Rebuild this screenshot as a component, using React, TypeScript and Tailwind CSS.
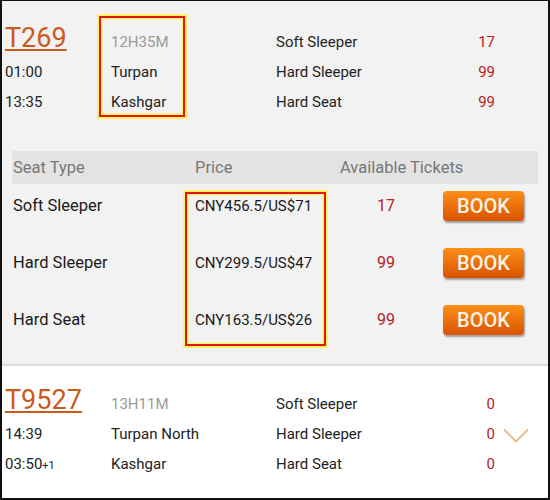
import React from "react";

const font = { fontFamily: "Roboto, 'Noto Sans', sans-serif" };

function TopRow({
  c1,
  c2,
  c3,
  c4,
  c2Gray,
  big,
}: {
  c1: React.ReactNode;
  c2: string;
  c3: string;
  c4: string;
  c2Gray?: boolean;
  big?: boolean;
}) {
  return (
    <div className="flex h-[30px] text-[15px] leading-[30px] text-[#222]">
      {big ? (
        <div className="w-[106px] text-[27px] leading-[22px] text-[#cb5a1c] underline decoration-[1.5px] underline-offset-[2px]">
          {c1}
        </div>
      ) : (
        <div className="w-[106px]">{c1}</div>
      )}
      <div className={c2Gray ? "w-[165px] text-[#9a9a9a]" : "w-[165px]"}>{c2}</div>
      <div className="w-[160px]">{c3}</div>
      <div className="w-[59px] text-right text-[#b3221f]">{c4}</div>
    </div>
  );
}

function BookRow({ seat, price, count }: { seat: string; price: string; count: string }) {
  return (
    <div className="flex h-[30px]">
      <div className="w-[183px] pl-px text-[16.5px] leading-[30px] text-[#1a1a1a]">{seat}</div>
      <div className="w-[145px] text-[15px] leading-[30px] text-[#1a1a1a]">{price}</div>
      <div className="w-[103px] pl-[37px] text-[16px] leading-[30px] text-[#b3221f]">{count}</div>
      <button className="h-[30px] w-[81px] rounded-[4px] bg-gradient-to-b from-[#fb8f17] to-[#d95200] text-[20px] leading-[30px] font-medium text-[#fff3e6] shadow-[1px_2px_2px_rgba(0,0,0,0.35)]">
        BOOK
      </button>
    </div>
  );
}

const hl =
  "absolute border-2 border-[#e0161b] shadow-[0_0_0_2px_#fff25e,inset_0_0_0_1.5px_#fff36b]";

export default function App() {
  return (
    <div
      style={font}
      className="h-[500px] w-[550px] overflow-hidden border-t border-l-2 border-r-2 border-b-2 border-[#111] bg-white"
    >
      <div className="relative h-[365px] border-b-2 border-[#dcdcdc] bg-[#f2f2f2] pt-[26px]">
        <div className="pl-[3px]">
          <TopRow big c1="T269" c2="12H35M" c2Gray c3="Soft Sleeper" c4="17" />
          <TopRow c1="01:00" c2="Turpan" c3="Hard Sleeper" c4="99" />
          <TopRow c1="13:35" c2="Kashgar" c3="Hard Seat" c4="99" />
        </div>
        <div className="mx-[10px] mt-[34px]">
          <div className="flex h-[33px] bg-[#e3e3e3] text-[16.5px] leading-[33px] text-[#777]">
            <div className="w-[183px] pl-px">Seat Type</div>
            <div className="w-[145px]">Price</div>
            <div>Available Tickets</div>
          </div>
          <div className="flex flex-col gap-[27px] pt-[7px]">
            <BookRow seat="Soft Sleeper" price="CNY456.5/US$71" count="17" />
            <BookRow seat="Hard Sleeper" price="CNY299.5/US$47" count="99" />
            <BookRow seat="Hard Seat" price="CNY163.5/US$26" count="99" />
          </div>
        </div>
        <div className={hl + " left-[97px] top-[15px] h-[101px] w-[86px]"} />
        <div className={hl + " left-[183px] top-[191px] h-[154px] w-[141px]"} />
      </div>
      <div className="relative bg-white pt-[23px]">
        <div className="pl-[3px]">
          <TopRow big c1="T9527" c2="13H11M" c2Gray c3="Soft Sleeper" c4="0" />
          <TopRow c1="14:39" c2="Turpan North" c3="Hard Sleeper" c4="0" />
          <TopRow
            c1={
              <span>
                03:50<span className="text-[11px]">+1</span>
              </span>
            }
            c2="Kashgar"
            c3="Hard Seat"
            c4="0"
          />
        </div>
        <svg
          className="absolute left-[501px] top-[62px]"
          width="26"
          height="15"
          viewBox="0 0 26 15"
          fill="none"
        >
          <polyline points="1,1.5 13,13.5 25,1.5" stroke="#e9b88c" strokeWidth="1.8" />
        </svg>
      </div>
    </div>
  );
}
